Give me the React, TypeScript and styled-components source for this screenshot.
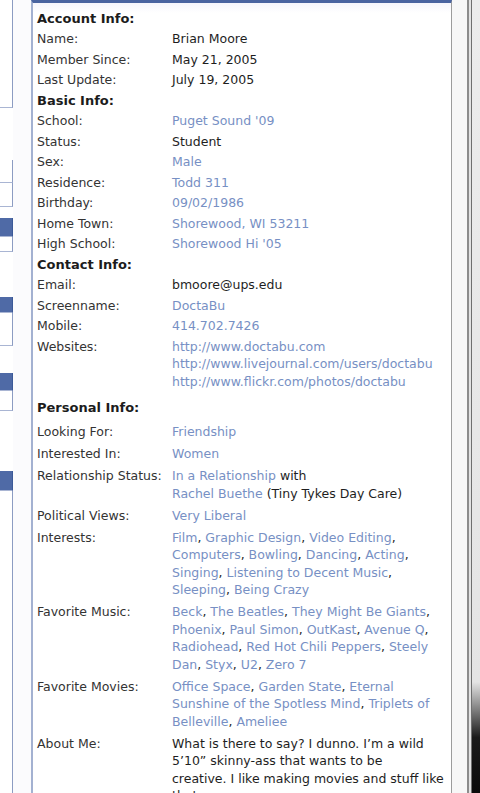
import styled, { createGlobalStyle } from 'styled-components';

type Piece = string | { link: string };
type Row = { label: string; lines: Piece[][] };
type Section = { title: string; rows: Row[]; personal?: boolean };

const lk = (t: string): Piece => ({ link: t });

// a line of comma separated links, commas stay dark
const list = (line: string): Piece[] => {
	const out: Piece[] = [];
	line.split(',').forEach((it, i) => {
		const txt = it.trim();
		if (i > 0) out.push(', ');
		if (txt) out.push(lk(txt));
	});
	return out;
};

const sections: Section[] = [
	{
		title: 'Account Info:',
		rows: [
			{ label: 'Name:', lines: [['Brian Moore']] },
			{ label: 'Member Since:', lines: [['May 21, 2005']] },
			{ label: 'Last Update:', lines: [['July 19, 2005']] },
		],
	},
	{
		title: 'Basic Info:',
		rows: [
			{ label: 'School:', lines: [[lk("Puget Sound '09")]] },
			{ label: 'Status:', lines: [['Student']] },
			{ label: 'Sex:', lines: [[lk('Male')]] },
			{ label: 'Residence:', lines: [[lk('Todd 311')]] },
			{ label: 'Birthday:', lines: [[lk('09/02/1986')]] },
			{ label: 'Home Town:', lines: [[lk('Shorewood, WI 53211')]] },
			{ label: 'High School:', lines: [[lk("Shorewood Hi '05")]] },
		],
	},
	{
		title: 'Contact Info:',
		rows: [
			{ label: 'Email:', lines: [['bmoore@ups.edu']] },
			{ label: 'Screenname:', lines: [[lk('DoctaBu')]] },
			{ label: 'Mobile:', lines: [[lk('414.702.7426')]] },
			{
				label: 'Websites:',
				lines: [
					[lk('http://www.doctabu.com')],
					[lk('http://www.livejournal.com/users/doctabu')],
					[lk('http://www.flickr.com/photos/doctabu')],
				],
			},
		],
	},
	{
		title: 'Personal Info:',
		personal: true,
		rows: [
			{ label: 'Looking For:', lines: [[lk('Friendship')]] },
			{ label: 'Interested In:', lines: [[lk('Women')]] },
			{
				label: 'Relationship Status:',
				lines: [
					[lk('In a Relationship'), ' with'],
					[lk('Rachel Buethe'), ' (Tiny Tykes Day Care)'],
				],
			},
			{ label: 'Political Views:', lines: [[lk('Very Liberal')]] },
			{
				label: 'Interests:',
				lines: [
					list('Film, Graphic Design, Video Editing,'),
					list('Computers, Bowling, Dancing, Acting,'),
					list('Singing, Listening to Decent Music,'),
					list('Sleeping, Being Crazy'),
				],
			},
			{
				label: 'Favorite Music:',
				lines: [
					list('Beck, The Beatles, They Might Be Giants,'),
					list('Phoenix, Paul Simon, OutKast, Avenue Q,'),
					list('Radiohead, Red Hot Chili Peppers, Steely'),
					list('Dan, Styx, U2, Zero 7'),
				],
			},
			{
				label: 'Favorite Movies:',
				lines: [
					list('Office Space, Garden State, Eternal'),
					list('Sunshine of the Spotless Mind, Triplets of'),
					list('Belleville, Ameliee'),
				],
			},
			{
				label: 'About Me:',
				lines: [
					['What is there to say? I dunno. I\u2019m a wild'],
					['5\u201910\u201d skinny-ass that wants to be'],
					['creative. I like making movies and stuff like'],
					['that.'],
				],
			},
		],
	},
];

// left column fragments of the neighbouring boxes, top to bottom
const sideParts: { gap: number; h: number; head?: boolean }[] = [
	{ gap: 0, h: 108 },
	{ gap: 52, h: 23 },
	{ gap: 0, h: 24 },
	{ gap: 11, h: 19, head: true },
	{ gap: 0, h: 15 },
	{ gap: 45, h: 16, head: true },
	{ gap: 0, h: 33 },
	{ gap: 27, h: 18, head: true },
	{ gap: 0, h: 20 },
	{ gap: 60, h: 20, head: true },
	{ gap: 0, h: 320 },
];

export default function App() {
	return (
		<>
			<Global />
			<Screen>
				<Side>
					{sideParts.map((p, i) => (
						<SideBox key={i} $gap={p.gap} $h={p.h} $head={p.head} />
					))}
				</Side>
				<Gutter />
				<Panel>
					{sections.map((sec) => (
						<InfoSection key={sec.title} $personal={sec.personal}>
							<Title>{sec.title}</Title>
							{sec.rows.map((r) => (
								<InfoRow key={r.label} $personal={sec.personal}>
									<Label>{r.label}</Label>
									<Value>
										{r.lines.map((ln, i) => (
											<Line key={i}>
												{ln.map((p, j) =>
													typeof p === 'string' ? (
														<span key={j}>{p}</span>
													) : (
														<Link key={j}>{p.link}</Link>
													)
												)}
											</Line>
										))}
									</Value>
								</InfoRow>
							))}
						</InfoSection>
					))}
				</Panel>
				<Edge>
					<EdgeFill />
					<EdgeLine $c='#8c8c8c' $w={2} />
					<EdgeLine $c='#e2e2e2' $w={2} />
					<EdgeLine $c='#6f6f6f' $w={1} />
					<EdgeDark />
				</Edge>
			</Screen>
		</>
	);
}

const Global = createGlobalStyle`
	html, body {
		margin: 0;
		padding: 0;
		background: #ffffff;
	}
	body {
		font-family: "DejaVu Sans", Tahoma, sans-serif;
	}
`;

const Screen = styled.div`
	display: flex;
	width: 480px;
	height: 793px;
	overflow: hidden;
	background: #ffffff;
`;

const Side = styled.div`
	display: flex;
	flex-direction: column;
	width: 13px;
	flex: none;
`;

const SideBox = styled.div<{ $gap: number; $h: number; $head?: boolean }>`
	flex: none;
	margin-top: ${(p) => p.$gap}px;
	height: ${(p) => p.$h}px;
	box-sizing: border-box;
	background: ${(p) => (p.$head ? '#4f6aa6' : '#ffffff')};
	border-right: 1px solid ${(p) => (p.$head ? '#3b5998' : '#8c9cc2')};
	border-bottom: 1px solid #a9b5d3;
`;

const Gutter = styled.div`
	width: 18px;
	flex: none;
	background: #fbfbfd;
`;

const Panel = styled.div`
	width: 421px;
	flex: none;
	box-sizing: border-box;
	border-left: 2px solid #a3b1d1;
	border-right: 1px solid #9c9c9c;
	border-top: 3px solid #4a64a0;
	background: linear-gradient(#f6f5fc 0, #ffffff 10px);
	padding: 5px 0 0 4px;
	font-size: 12.5px;
	line-height: 17.5px;
	color: #333333;
`;

const InfoSection = styled.div<{ $personal?: boolean }>`
	margin-top: ${(p) => (p.$personal ? 6 : 0)}px;

	> div:first-child {
		margin-bottom: ${(p) => (p.$personal ? 3 : 0)}px;
	}
`;

const Title = styled.div`
	font-weight: bold;
	font-size: 13px;
	color: #1c1c1c;
	padding: 1.5px 0;
`;

const InfoRow = styled.div<{ $personal?: boolean }>`
	display: flex;
	padding: ${(p) => (p.$personal ? 2.25 : 1.5)}px 0;
`;

const Label = styled.div`
	width: 135px;
	flex: none;
	color: #333333;
`;

const Value = styled.div`
	color: #1e1e1e;
	white-space: nowrap;
`;

const Line = styled.div``;

const Link = styled.span`
	color: #7790c4;
`;

const Edge = styled.div`
	display: flex;
	flex: 1;
`;

const EdgeFill = styled.div`
	width: 15px;
	flex: none;
	background: #f7f7f7;
`;

const EdgeLine = styled.div<{ $c: string; $w: number }>`
	width: ${(p) => p.$w}px;
	flex: none;
	background: ${(p) => p.$c};
`;

const EdgeDark = styled.div`
	flex: 1;
	background: linear-gradient(#ececec 0, #e4e4e4 86%, #1a1a1a 93%, #0a0a0a 100%);
`;
